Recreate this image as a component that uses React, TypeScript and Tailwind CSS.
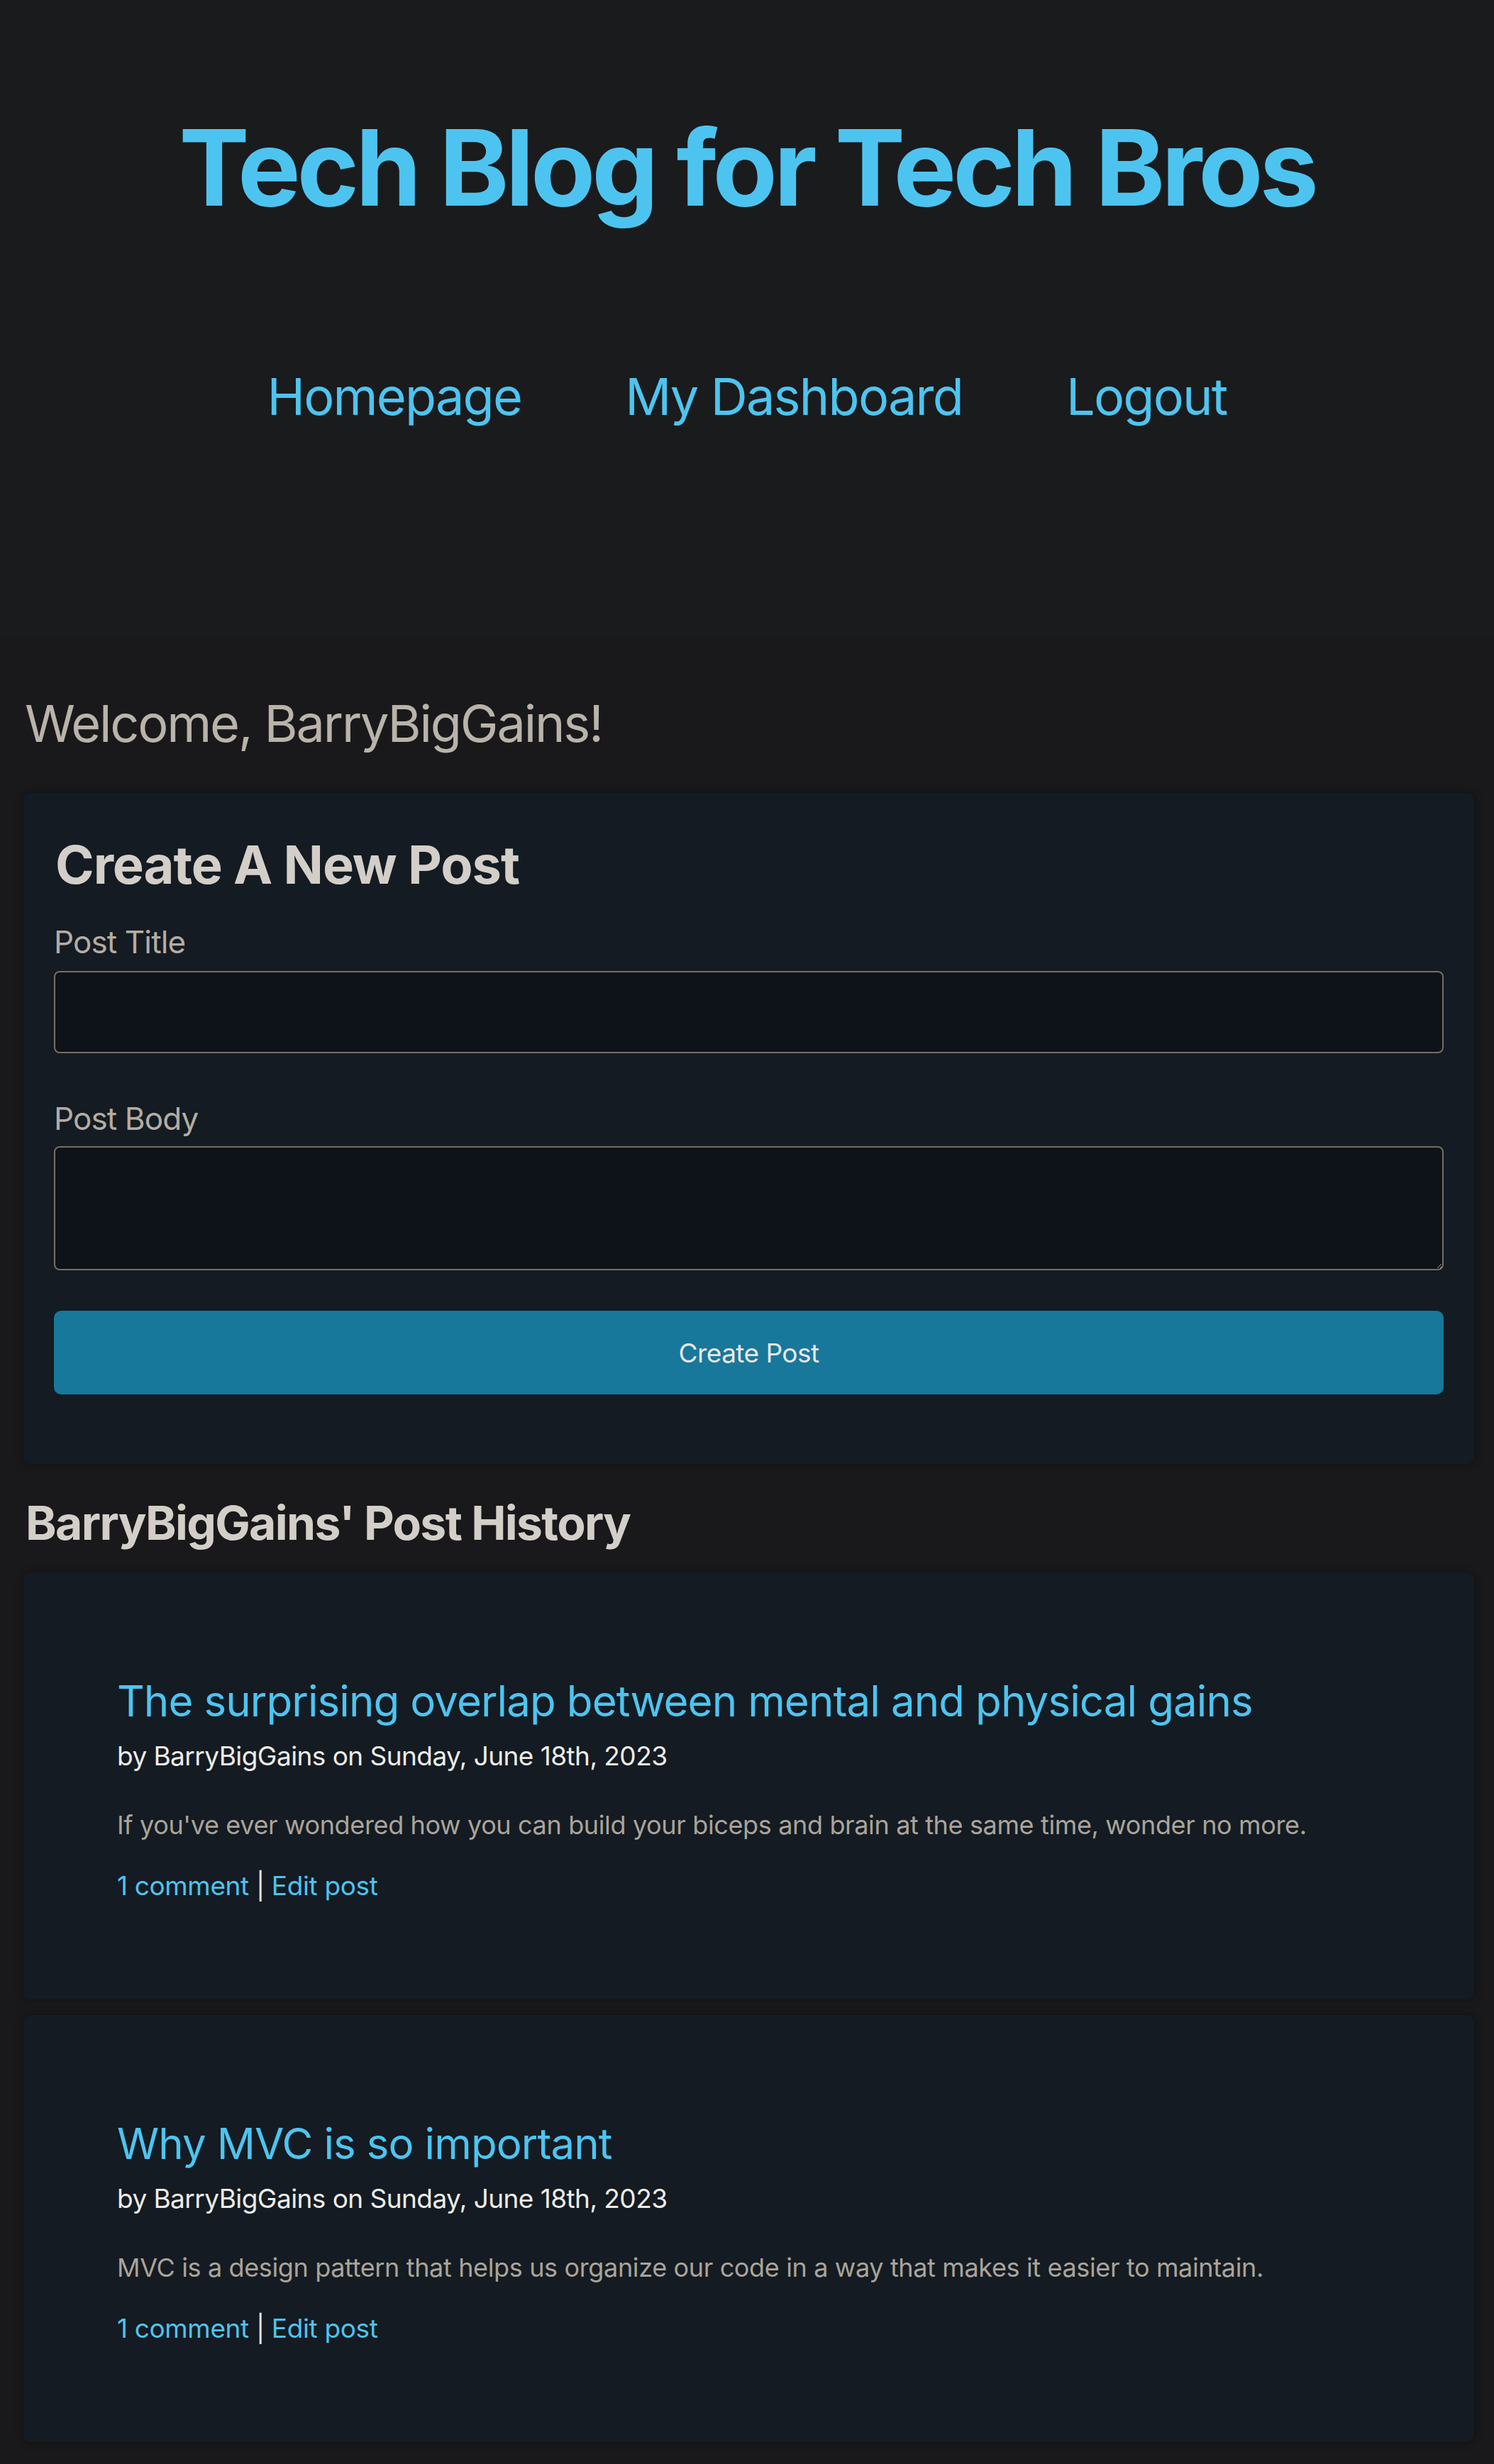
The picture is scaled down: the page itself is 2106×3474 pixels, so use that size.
import React from "react";

const posts = [
  {
    title: "The surprising overlap between mental and physical gains",
    author: "BarryBigGains",
    date: "Sunday, June 18th, 2023",
    body: "If you've ever wondered how you can build your biceps and brain at the same time, wonder no more.",
    comments: 1,
  },
  {
    title: "Why MVC is so important",
    author: "BarryBigGains",
    date: "Sunday, June 18th, 2023",
    body: "MVC is a design pattern that helps us organize our code in a way that makes it easier to maintain.",
    comments: 1,
  },
];

function PostCard({ post }: { post: (typeof posts)[number] }) {
  return (
    <div className="h-[602px] rounded-[10px] bg-[#141b22] pl-[132px] pr-[60px] pt-[151px] shadow-[0_0_12px_rgba(0,0,0,0.35)]">
      <h3 className="text-[60px] leading-none tracking-[-0.015em] text-[#4dc4f0]">
        <a href="#">{post.title}</a>
      </h3>
      <p className="mt-[29px] text-[37px] leading-none tracking-[-0.015em] text-[#eeece9]">
        by {post.author} on {post.date}
      </p>
      <p className="mt-[61px] text-[36px] leading-none tracking-[-0.01em] text-[#aaa49a]">{post.body}</p>
      <p className="mt-[49px] text-[37px] leading-none tracking-[-0.01em] text-[#e6e4e0]">
        <a href="#" className="text-[#4dc4f0]">
          {post.comments} comment
        </a>{" "}
        |{" "}
        <a href="#" className="text-[#4dc4f0]">
          Edit post
        </a>
      </p>
    </div>
  );
}

export default function App() {
  return (
    <div className="min-h-screen bg-[#19191b] font-['Inter','Noto_Sans',sans-serif]">
      <header className="h-[900px] bg-[#1a1b1d] pt-[162px] text-center">
        <h1 className="text-[149px] font-bold leading-none tracking-[-0.034em] text-[#4dc4f0]">
          Tech Blog for Tech Bros
        </h1>
        <nav className="mt-[212px] flex justify-center gap-[146px] text-[72px] leading-none tracking-[-0.025em] text-[#4dc4f0]">
          <a href="#">Homepage</a>
          <a href="#">My Dashboard</a>
          <a href="#">Logout</a>
        </nav>
      </header>

      <main className="mt-[84px] pl-[33px] pr-[28px] pb-[30px]">
        <h2 className="pl-[2px] text-[72px] leading-none tracking-[-0.03em] text-[#b9b3a9]">
          Welcome, BarryBigGains!
        </h2>

        <section className="mt-[62px] rounded-[10px] bg-[#141b22] px-[43px] pt-[64px] pb-[98px] shadow-[0_0_12px_rgba(0,0,0,0.35)]">
          <h2 className="pl-[2px] text-[74px] font-bold leading-none tracking-[-0.015em] text-[#d3cfc8]">
            Create A New Post
          </h2>
          <form onSubmit={(e) => e.preventDefault()}>
            <label className="mt-[50px] block text-[44px] leading-none tracking-[-0.02em] text-[#b3ada3]">
              Post Title
            </label>
            <input
              type="text"
              className="mt-[19px] block h-[116px] w-full rounded-[8px] border-[2px] border-[#766e61] bg-[#0e1219] px-4 text-[38px] text-[#eeece9] outline-none"
            />
            <label className="mt-[70px] block text-[44px] leading-none tracking-[-0.02em] text-[#b3ada3]">
              Post Body
            </label>
            <textarea className="mt-[17px] block h-[175px] w-full rounded-[8px] border-[2px] border-[#766e61] bg-[#0e1219] px-4 py-2 text-[38px] text-[#eeece9] outline-none" />
            <button
              type="submit"
              className="mt-[57px] block h-[118px] w-full rounded-[10px] bg-[#17789b] text-[37px] leading-none tracking-[-0.015em] text-[#e9e7e4]"
            >
              Create Post
            </button>
          </form>
        </section>

        <h2 className="mt-[50px] pl-[3px] text-[66px] font-bold leading-none tracking-[-0.025em] text-[#d3cfc8]">
          BarryBigGains' Post History
        </h2>

        <div className="mt-[37px] flex flex-col gap-[22px]">
          {posts.map((post) => (
            <PostCard key={post.title} post={post} />
          ))}
        </div>
      </main>
    </div>
  );
}
